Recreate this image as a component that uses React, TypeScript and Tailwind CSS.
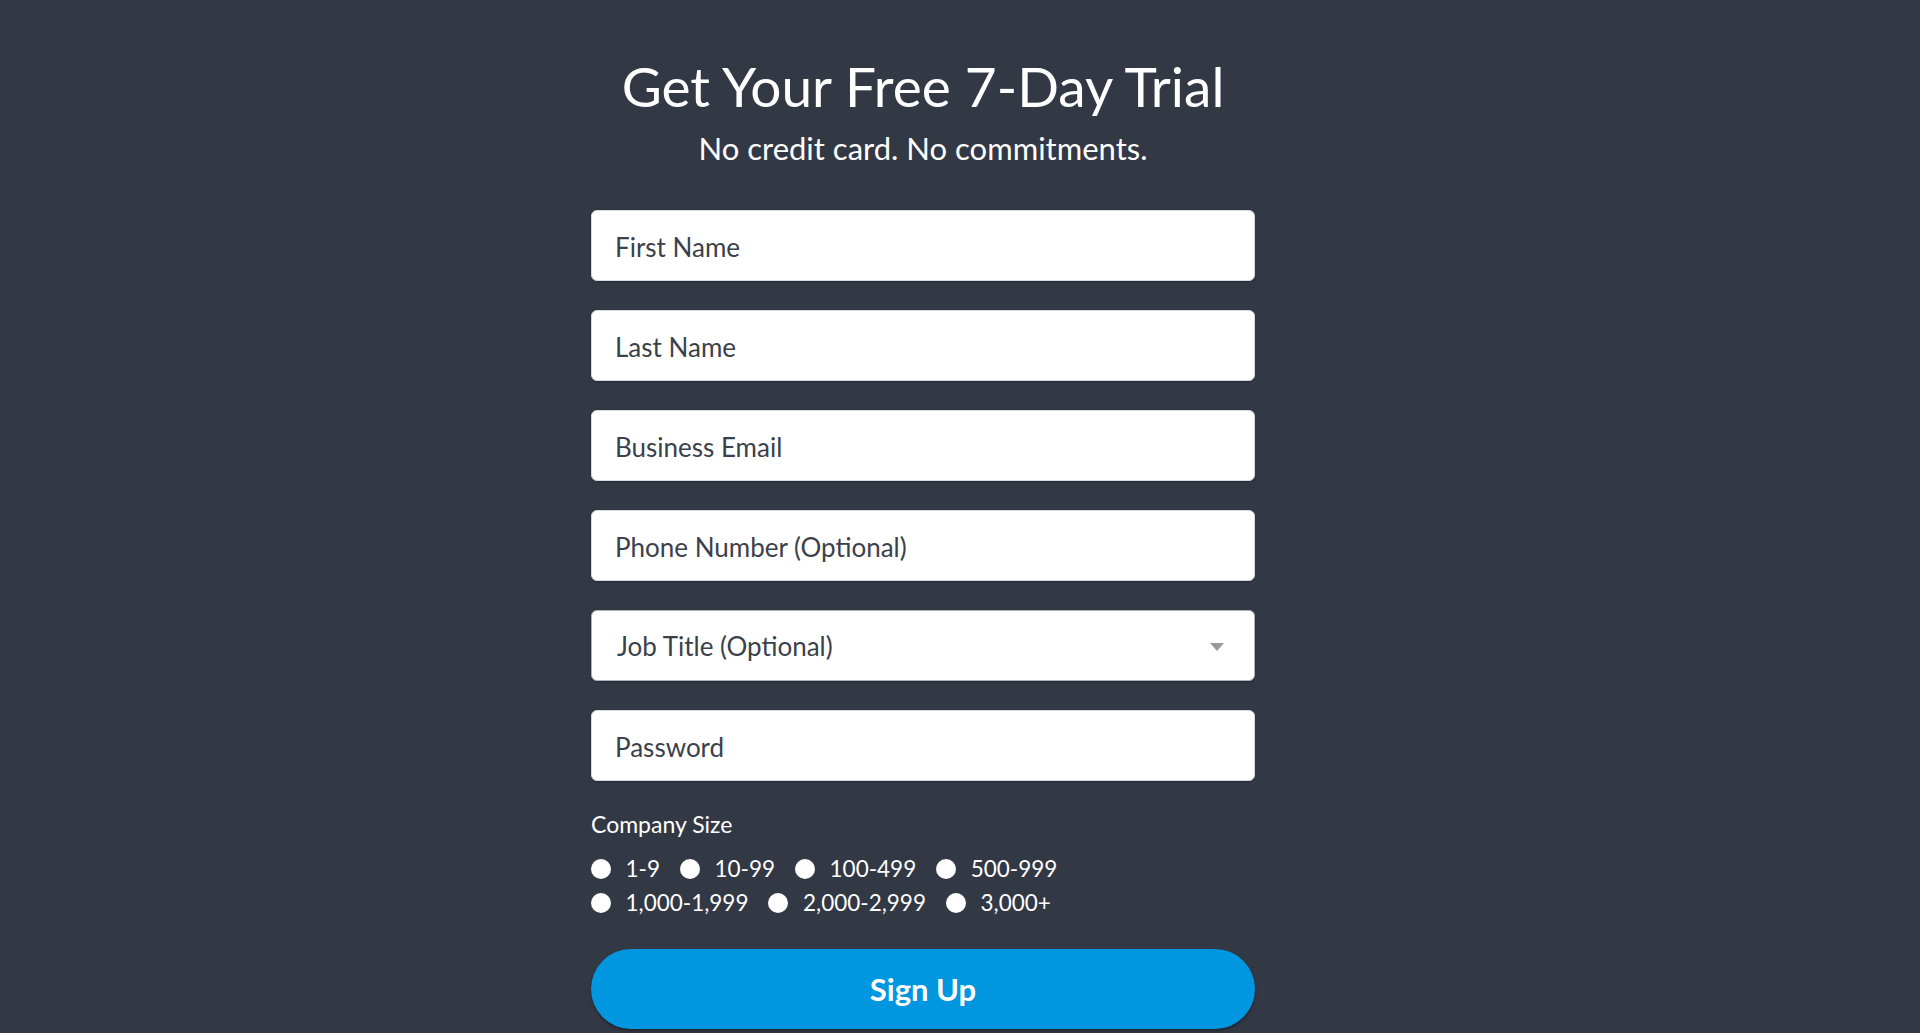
import React from "react";

const fields = ["First Name", "Last Name", "Business Email", "Phone Number (Optional)"];
const sizes = [
  ["1-9", "10-99", "100-499", "500-999"],
  ["1,000-1,999", "2,000-2,999", "3,000+"],
];

function TextField({ placeholder, type = "text" }: { placeholder: string; type?: string }) {
  return (
    <input
      type={type}
      placeholder={placeholder}
      className="h-[71px] w-full rounded-[6px] border border-[#d6d9de] bg-white px-[23px] pt-[3px] text-[26px] text-[#333] placeholder:text-[#3b414b] outline-none shadow-[0_1px_2px_rgba(0,0,0,0.25)]"
    />
  );
}

export default function App() {
  return (
    <div
      className="min-h-screen w-full bg-[#333845] flex justify-center pr-[74px]"
      style={{ fontFamily: "Lato, 'Open Sans', sans-serif" }}
    >
      <div className="w-[664px] flex flex-col items-stretch pt-[50px]">
        <h1 className="text-center text-white text-[55px] leading-[72px] font-normal">
          Get Your Free 7-Day Trial
        </h1>
        <p className="text-center text-white text-[31px] leading-[40px] mt-[6px]">
          No credit card. No commitments.
        </p>

        <form className="mt-[42px] flex flex-col gap-[29px]" onSubmit={(e) => e.preventDefault()}>
          {fields.map((f) => (
            <TextField key={f} placeholder={f} />
          ))}
          <div className="relative h-[71px] w-full rounded-[6px] border border-[#aeb3ba] bg-white flex items-center pl-[25px] pr-[28px] pt-[2px] shadow-[0_1px_2px_rgba(0,0,0,0.25)]">
            <span className="text-[26px] text-[#3b414b] flex-1">Job Title (Optional)</span>
            <svg width="14" height="8" viewBox="0 0 14 8" className="mr-[2px]">
              <path d="M0 0 L14 0 L7 8 Z" fill="#9a9a9a" />
            </svg>
          </div>
          <TextField placeholder="Password" type="password" />
        </form>

        <div className="mt-[29px] text-white text-[23px] leading-[28px]">Company Size</div>
        <div className="mt-[19px] flex flex-col gap-[10px]">
          {sizes.map((row, i) => (
            <div key={i} className="flex items-center">
              {row.map((s) => (
                <label key={s} className="flex items-center mr-[20px] text-white text-[22.5px] leading-[24px]">
                  <span className="w-[20px] h-[20px] rounded-full bg-white inline-block" />
                  <span className="ml-[14.5px]">{s}</span>
                </label>
              ))}
            </div>
          ))}
        </div>

        <button
          type="button"
          className="mt-[34px] h-[80px] w-full rounded-[40px] bg-[#0096e0] text-white text-[31px] font-bold shadow-[0_2px_3px_rgba(0,0,0,0.35)]"
        >
          Sign Up
        </button>
      </div>
    </div>
  );
}
